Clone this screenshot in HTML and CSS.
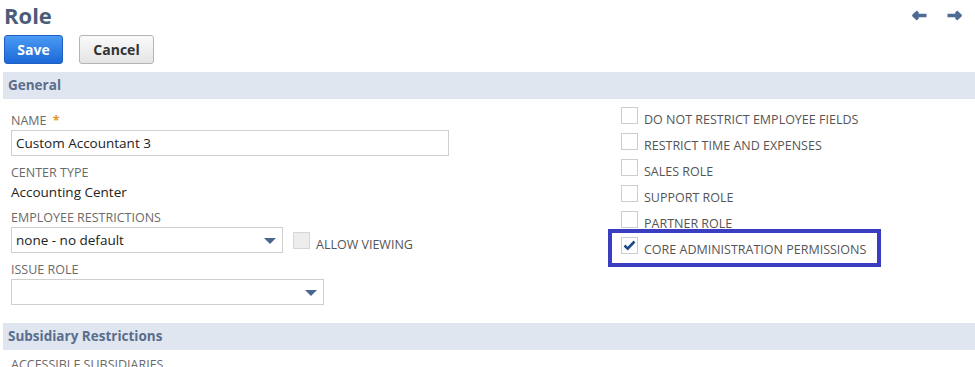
FILE: index.html
```html
<!DOCTYPE html>
<html lang="en">
<head>
  <meta charset="UTF-8" />
  <title>Role</title>
  <link rel="stylesheet" href="styles.css">
</head>
<body>

  <div class="page-head">
    <h1>Role</h1>
    <div class="nav-arrows">
      <svg width="17" height="11" viewBox="0 0 17 11"><path d="M15.5 5.5H3.5M7 1.8L2.8 5.5 7 9.2" fill="none" stroke="#4f6b93" stroke-width="3.4" stroke-linejoin="round"/></svg>
      <svg width="17" height="11" viewBox="0 0 17 11"><path d="M1.5 5.5H13.5M10 1.8l4.2 3.7L10 9.2" fill="none" stroke="#4f6b93" stroke-width="3.4" stroke-linejoin="round"/></svg>
    </div>
  </div>

  <div class="buttons">
    <button class="btn btn-save">Save</button>
    <button class="btn btn-cancel">Cancel</button>
  </div>

  <div class="section-bar">General</div>

  <div class="columns">
    <div class="col-left">
      <div class="field">
        <div class="label">NAME <span class="req">*</span></div>
        <input class="text-input" type="text" value="Custom Accountant 3">
      </div>

      <div class="field">
        <div class="label">CENTER TYPE</div>
        <div class="value">Accounting Center</div>
      </div>

      <div class="field">
        <div class="label">EMPLOYEE RESTRICTIONS</div>
        <div class="inline-row">
          <div class="dropdown dropdown-emp">
            <span>none - no default</span>
            <svg width="12" height="6" viewBox="0 0 12 6"><path d="M0 0h12L6 6z" fill="#4a6690"/></svg>
          </div>
          <div class="check-row">
            <span class="checkbox disabled"></span>
            <span class="check-label">ALLOW VIEWING</span>
          </div>
        </div>
      </div>

      <div class="field">
        <div class="label">ISSUE ROLE</div>
        <div class="dropdown dropdown-issue">
          <span></span>
          <svg width="12" height="6" viewBox="0 0 12 6"><path d="M0 0h12L6 6z" fill="#4a6690"/></svg>
        </div>
      </div>
    </div>

    <div class="col-right">
      <div class="check-row"><span class="checkbox"></span><span class="check-label">DO NOT RESTRICT EMPLOYEE FIELDS</span></div>
      <div class="check-row"><span class="checkbox"></span><span class="check-label">RESTRICT TIME AND EXPENSES</span></div>
      <div class="check-row"><span class="checkbox"></span><span class="check-label">SALES ROLE</span></div>
      <div class="check-row"><span class="checkbox"></span><span class="check-label">SUPPORT ROLE</span></div>
      <div class="check-row"><span class="checkbox"></span><span class="check-label">PARTNER ROLE</span></div>
      <div class="check-row highlight">
        <span class="checkbox">
          <svg width="15" height="15" viewBox="0 0 15 15"><path d="M2.5 7.5l3.2 3.2L12.5 3.5" fill="none" stroke="#1d4a8a" stroke-width="2.6"/></svg>
        </span>
        <span class="check-label">CORE ADMINISTRATION PERMISSIONS</span>
      </div>
    </div>
  </div>

  <div class="section-bar">Subsidiary Restrictions</div>

  <div class="sub-body">
    <div class="label">ACCESSIBLE SUBSIDIARIES</div>
  </div>

</body>
</html>
```

FILE: styles.css
```css
* { box-sizing: border-box; }
body {
  font-family: 'Open Sans', sans-serif;
  margin: 0;
  background: #fff;
  color: #222;
  overflow: hidden;
}
.page-head {
  height: 35px;
  display: flex;
  justify-content: space-between;
  align-items: flex-start;
}
h1 {
  margin: 0;
  padding-left: 4px;
  font-size: 22px;
  line-height: 30px;
  font-weight: bold;
  color: #4b5c78;
}
.nav-arrows {
  display: flex;
  gap: 18px;
  padding: 10px 12px 0 0;
}
.nav-arrows svg { display: block; }

.buttons {
  display: flex;
  gap: 16px;
  padding-left: 4px;
}
.btn {
  height: 29px;
  border-radius: 3px;
  font-family: 'Open Sans', sans-serif;
  font-size: 14px;
  font-weight: bold;
  padding: 0;
  cursor: pointer;
}
.btn-save {
  width: 59px;
  color: #fff;
  background: linear-gradient(#4b9af3, #1c68d8);
  border: 1px solid #1d5fc2;
}
.btn-cancel {
  width: 75px;
  color: #333;
  background: linear-gradient(#fafafa, #e4e4e4);
  border: 1px solid #b4b4b4;
}

.section-bar {
  margin: 8px 0 0 3px;
  height: 27px;
  line-height: 27px;
  padding-left: 5px;
  background: #e0e6ef;
  color: #5a6d8c;
  font-size: 13.5px;
  font-weight: bold;
}

.columns {
  display: grid;
  grid-template-columns: 610px 1fr;
  margin-bottom: 18px;
}
.col-left { padding: 14px 0 0 11px; }
.col-right { padding: 8px 0 0 11px; }

.field { margin-bottom: 9px; }
.field:last-child { margin-bottom: 0; }
.label {
  font-size: 12.5px;
  line-height: 16px;
  color: #6a6a6a;
  margin-bottom: 1px;
}
.req {
  color: #e3962a;
  font-weight: bold;
  margin-left: 3px;
}
.value {
  margin-top: 2px;
  font-size: 13.5px;
  line-height: 18px;
  color: #222;
}
.text-input {
  display: block;
  width: 438px;
  height: 26px;
  border: 1px solid #cfcfcf;
  padding: 0 4px;
  font-family: 'Open Sans', sans-serif;
  font-size: 13.5px;
  color: #222;
  outline: none;
}
.inline-row {
  display: flex;
  align-items: center;
  gap: 10px;
}
.dropdown {
  height: 26px;
  border: 1px solid #cfcfcf;
  padding: 0 6px 0 4px;
  display: flex;
  align-items: center;
  justify-content: space-between;
  font-size: 13.5px;
  color: #222;
}
.dropdown svg { margin-top: 1px; }
.dropdown-emp { width: 272px; }
.dropdown-issue { width: 313px; }

.check-row {
  display: flex;
  align-items: flex-end;
  gap: 6px;
}
.col-right .check-row { margin-bottom: 9px; }
.checkbox {
  width: 17px;
  height: 17px;
  border: 1px solid #cdcdcd;
  background: #fff;
  flex: none;
  display: flex;
  align-items: center;
  justify-content: center;
}
.checkbox.disabled {
  background: #ededed;
  border-color: #d6d6d6;
}
.check-label {
  font-size: 12.5px;
  line-height: 13px;
  color: #555;
  margin-bottom: -2px;
  white-space: nowrap;
}
.col-right .check-row.highlight {
  width: fit-content;
  margin: -8px 0 0 -13px;
  border: 4px solid #3a3dc0;
  padding: 4px 11px 9px 9px;
}

.sub-body { padding: 7px 0 0 11px; }
```
